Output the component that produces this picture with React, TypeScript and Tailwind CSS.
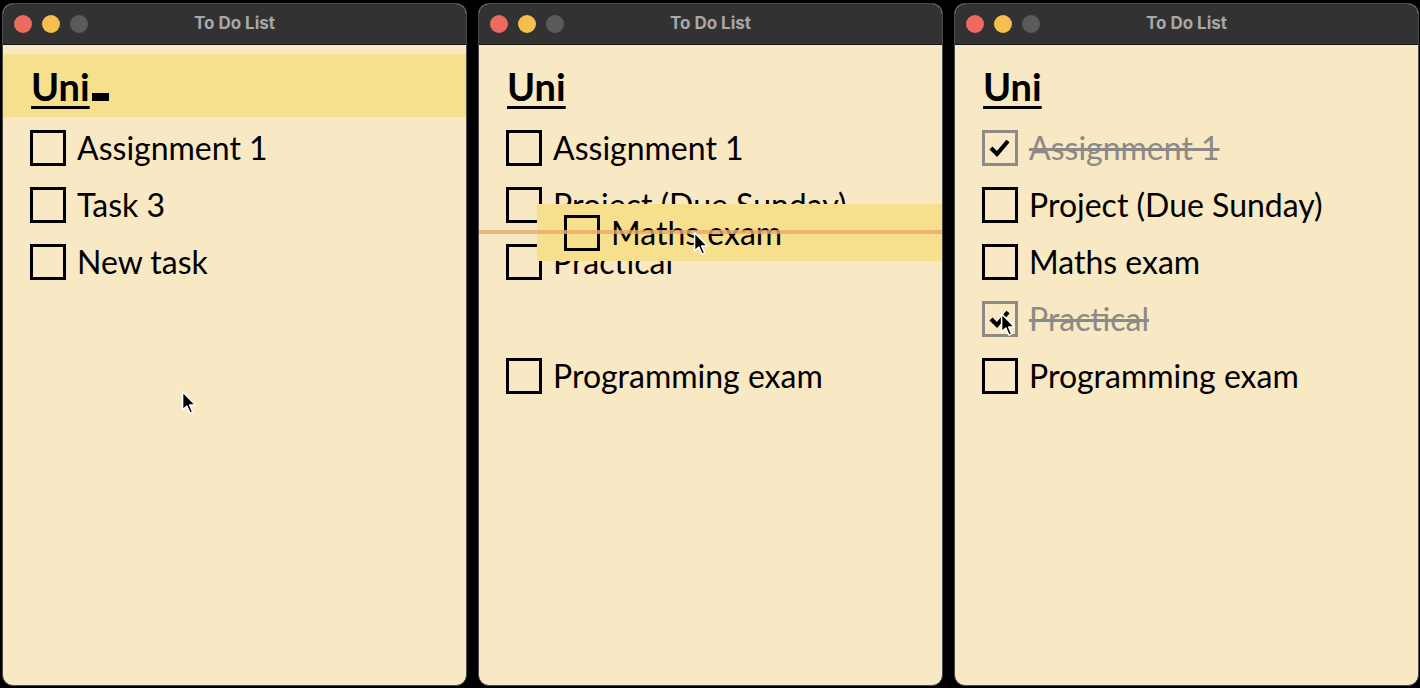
import React from 'react';

type Task = { label: string; done?: boolean };

const Cursor: React.FC<{ className?: string }> = ({ className }) => (
  <svg className={className} width="17" height="26" viewBox="0 0 16 24">
    <path
      d="M1.5 1.5 L1.5 18.5 L5.5 14.8 L8.4 21.5 L11 20.4 L8.2 13.9 L13.6 13.9 Z"
      fill="#000"
      stroke="#fff"
      strokeWidth="1.4"
      strokeLinejoin="round"
    />
  </svg>
);

const CheckBox: React.FC<{ done?: boolean }> = ({ done }) => (
  <div
    className={`relative w-[36px] h-[36px] shrink-0 border-[3px] ${
      done ? 'border-[#8c8a86]' : 'border-black'
    }`}
  >
    {done && (
      <svg className="absolute left-[3px] top-[4px]" width="24" height="22" viewBox="0 0 24 22">
        <path d="M3 11 L9 17 L20 4" fill="none" stroke="#000" strokeWidth="4.2" />
      </svg>
    )}
  </div>
);

const Row: React.FC<{ task?: Task }> = ({ task }) => (
  <div className="h-[57px] flex items-center gap-[11px] pl-[27px]">
    {task && (
      <>
        <CheckBox done={task.done} />
        <span
          className={`text-[32px] leading-none whitespace-nowrap ${
            task.done ? 'text-[#8c8a86] line-through decoration-[3px]' : 'text-black'
          }`}
        >
          {task.label}
        </span>
      </>
    )}
  </div>
);

const Window: React.FC<{ children: React.ReactNode }> = ({ children }) => (
  <div className="relative w-[465px] h-[683px] shrink-0 rounded-[11px] overflow-hidden bg-[#f8e8c3] border border-[#4a4a4a] flex flex-col">
    <div className="h-[41px] shrink-0 bg-[#323232] border-b border-[#151515] flex items-center relative">
      <div className="flex items-center gap-[10px] pl-[11px]">
        <span className="w-[18px] h-[18px] rounded-full bg-[#ec6a5e]" />
        <span className="w-[18px] h-[18px] rounded-full bg-[#f4bf4f]" />
        <span className="w-[18px] h-[18px] rounded-full bg-[#5b5b5b]" />
      </div>
      <div className="absolute inset-0 flex items-center justify-center text-[17px] font-bold text-[#a8a8a8] font-['Inter',sans-serif]">
        To Do List
      </div>
    </div>
    {children}
  </div>
);

const Heading: React.FC<{ active?: boolean }> = ({ active }) => (
  <div className={`mt-[9px] h-[63px] flex items-center pl-[28px] ${active ? 'bg-[#f6e08e]' : ''}`}>
    <span className="text-[38px] font-bold underline decoration-[3px] underline-offset-[5px] leading-none">Uni</span>
    {active && <span className="ml-[2px] mt-[22px] w-[17px] h-[8px] bg-black" />}
  </div>
);

export default function App() {
  return (
    <div className="w-[1420px] h-[688px] bg-black flex gap-[11px] pl-[2px] pt-[3px] font-['Lato',sans-serif] overflow-hidden">
      <Window>
        <Heading active />
        <div className="pt-[2px]">
          <Row task={{ label: 'Assignment 1' }} />
          <Row task={{ label: 'Task 3' }} />
          <Row task={{ label: 'New task' }} />
        </div>
        <Cursor className="absolute left-[178px] top-[386px]" />
      </Window>

      <Window>
        <Heading />
        <div className="pt-[2px]">
          <Row task={{ label: 'Assignment 1' }} />
          <Row task={{ label: 'Project (Due Sunday)' }} />
          <Row task={{ label: 'Practical' }} />
          <Row />
          <Row task={{ label: 'Programming exam' }} />
        </div>
        <div className="absolute left-0 right-0 top-[200px] h-[57px] pl-[58px]">
          <div className="h-full bg-[#f6e08e] flex items-center gap-[11px] pl-[27px]">
            <CheckBox />
            <span className="text-[32px] leading-none text-black whitespace-nowrap">Maths exam</span>
          </div>
        </div>
        <div className="absolute left-0 right-0 top-[226px] h-[4px] bg-[#eaa86a]/80" />
        <Cursor className="absolute left-[214px] top-[227px]" />
      </Window>

      <Window>
        <Heading />
        <div className="pt-[2px]">
          <Row task={{ label: 'Assignment 1', done: true }} />
          <Row task={{ label: 'Project (Due Sunday)' }} />
          <Row task={{ label: 'Maths exam' }} />
          <Row task={{ label: 'Practical', done: true }} />
          <Row task={{ label: 'Programming exam' }} />
        </div>
        <Cursor className="absolute left-[45px] top-[308px]" />
      </Window>
    </div>
  );
}
